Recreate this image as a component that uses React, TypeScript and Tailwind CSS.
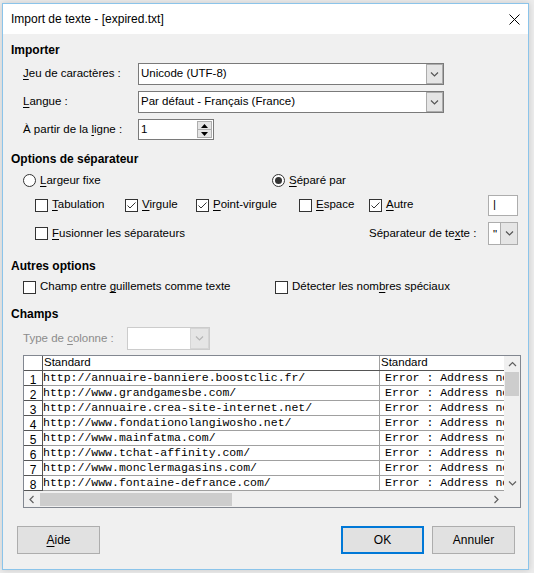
import React from 'react';

const rows = [
  'http://annuaire-banniere.boostclic.fr/',
  'http://www.grandgamesbe.com/',
  'http://annuaire.crea-site-internet.net/',
  'http://www.fondationolangiwosho.net/',
  'http://www.mainfatma.com/',
  'http://www.tchat-affinity.com/',
  'http://www.monclermagasins.com/',
  'http://www.fontaine-defrance.com/',
];

const U = ({ children }: { children: React.ReactNode }) => (
  <span className="underline decoration-1 underline-offset-[2px]">{children}</span>
);

function CheckBox({ checked = false }: { checked?: boolean }) {
  return (
    <span className="w-[13px] h-[13px] border border-[#333] bg-white flex items-center justify-center shrink-0">
      {checked && (
        <svg width="11" height="11" viewBox="0 0 11 11">
          <path d="M1.5 5.5 L4 8 L9.5 2.5" fill="none" stroke="#333" strokeWidth="1" />
        </svg>
      )}
    </span>
  );
}

function Radio({ on = false }: { on?: boolean }) {
  return (
    <span className="w-[13px] h-[13px] rounded-full border border-[#333] bg-white flex items-center justify-center shrink-0">
      {on && <span className="w-[7px] h-[7px] rounded-full bg-[#333]" />}
    </span>
  );
}

function Chevron({ dir = 'down', color = '#555' }: { dir?: 'down' | 'up' | 'left' | 'right'; color?: string }) {
  const d = {
    down: 'M1 1.5 L4.5 5 L8 1.5',
    up: 'M1 5 L4.5 1.5 L8 5',
    left: 'M5.5 1 L2 4.5 L5.5 8',
    right: 'M2.5 1 L6 4.5 L2.5 8',
  }[dir];
  const vertical = dir === 'down' || dir === 'up';
  return (
    <svg width={vertical ? 9 : 8} height={vertical ? 7 : 9} viewBox={vertical ? '0 0 9 7' : '0 0 8 9'}>
      <path d={d} fill="none" stroke={color} strokeWidth="1.2" />
    </svg>
  );
}

function Combo({ value, className }: { value: string; className: string }) {
  return (
    <div className={`flex h-[22px] border border-[#7a7a7a] bg-white ${className}`}>
      <div className="flex-1 flex items-center pl-[2px] overflow-hidden whitespace-nowrap">{value}</div>
      <div className="w-[17px] bg-[#e5e5e5] border border-[#acacac] flex items-center justify-center">
        <Chevron />
      </div>
    </div>
  );
}

export default function App() {
  return (
    <div
      className="w-[534px] h-[573px] bg-[#ececec] pt-[3px] pl-[2px] overflow-hidden text-[11.5px] text-black"
      style={{ fontFamily: '"Liberation Sans", Arial, sans-serif' }}
    >
      <div className="w-[527px] h-[567px] border border-[#8bc4ea] bg-[#f0f0f0] flex flex-col shadow-[0_0_6px_rgba(0,0,0,0.15)]">
        {/* Title bar */}
        <div className="h-[30px] bg-white flex items-center justify-between pl-[8px] pr-[8px] shrink-0">
          <span className="text-[12px]">Import de texte - [expired.txt]</span>
          <svg width="11" height="11" viewBox="0 0 11 11">
            <path d="M0.5 0.5 L10.5 10.5 M10.5 0.5 L0.5 10.5" stroke="#000" strokeWidth="1" />
          </svg>
        </div>

        <div className="flex flex-col pl-[8px]">
          {/* Importer */}
          <div className="mt-[8px] h-[16px] flex items-center font-bold text-[12px]">Importer</div>

          <div className="mt-[5px] h-[22px] flex items-center ml-[12px]">
            <span className="w-[115px]"><U>J</U>eu de caractères :</span>
            <Combo value="Unicode (UTF-8)" className="w-[306px]" />
          </div>
          <div className="mt-[6px] h-[22px] flex items-center ml-[12px]">
            <span className="w-[115px]"><U>L</U>angue :</span>
            <Combo value="Par défaut - Français (France)" className="w-[306px]" />
          </div>
          <div className="mt-[6px] h-[21px] flex items-center ml-[12px]">
            <span className="w-[115px]">À partir de la <U>l</U>igne :</span>
            <div className="w-[76px] h-[21px] border border-[#7a7a7a] bg-white flex">
              <div className="flex-1 pl-[2px] flex items-center">1</div>
              <div className="w-[15px] flex flex-col my-[1px] mr-[1px]">
                <div className="flex-1 bg-[#e5e5e5] border border-[#adadad] flex items-center justify-center">
                  <svg width="7" height="4" viewBox="0 0 7 4"><path d="M0 4 L3.5 0 L7 4 Z" fill="#000" /></svg>
                </div>
                <div className="flex-1 bg-[#e5e5e5] border border-t-0 border-[#adadad] flex items-center justify-center">
                  <svg width="7" height="4" viewBox="0 0 7 4"><path d="M0 0 L3.5 4 L7 0 Z" fill="#000" /></svg>
                </div>
              </div>
            </div>
          </div>

          {/* Options de séparateur */}
          <div className="mt-[11px] h-[16px] flex items-center font-bold text-[12px]">Options de séparateur</div>
          <div className="mt-[6px] h-[15px] flex items-center ml-[12px]">
            <div className="w-[249px] flex items-center gap-[4px]">
              <Radio />
              <span><U>L</U>argeur fixe</span>
            </div>
            <div className="flex items-center gap-[4px]">
              <Radio on />
              <span><U>S</U>éparé par</span>
            </div>
          </div>
          <div className="mt-[6px] h-[22px] flex items-center ml-[24px]">
            <div className="w-[90px] flex items-center gap-[4px]">
              <CheckBox />
              <span><U>T</U>abulation</span>
            </div>
            <div className="w-[71px] flex items-center gap-[4px]">
              <CheckBox checked />
              <span><U>V</U>irgule</span>
            </div>
            <div className="w-[103px] flex items-center gap-[4px]">
              <CheckBox checked />
              <span><U>P</U>oint-virgule</span>
            </div>
            <div className="w-[70px] flex items-center gap-[4px]">
              <CheckBox />
              <span><U>E</U>space</span>
            </div>
            <div className="w-[119px] flex items-center gap-[4px]">
              <CheckBox checked />
              <span><U>A</U>utre</span>
            </div>
            <div className="w-[30px] h-[21px] border border-[#adadad] bg-white flex items-center pl-[4px]">|</div>
          </div>
          <div className="mt-[6px] h-[23px] flex items-center ml-[24px]">
            <div className="w-[334px] flex items-center gap-[4px]">
              <CheckBox />
              <span><U>F</U>usionner les séparateurs</span>
            </div>
            <span className="w-[119px]">Séparateur de te<U>x</U>te :</span>
            <div className="w-[30px] h-[23px] border border-[#adadad] bg-white flex">
              <div className="w-[11px] pl-[4px] pt-[3px]">"</div>
              <div className="flex-1 bg-[#e5e5e5] border-l border-[#adadad] flex items-center justify-center">
                <Chevron />
              </div>
            </div>
          </div>

          {/* Autres options */}
          <div className="mt-[13px] h-[16px] flex items-center font-bold text-[12px]">Autres options</div>
          <div className="mt-[6px] h-[14px] flex items-center ml-[12px]">
            <div className="w-[252px] flex items-center gap-[4px]">
              <CheckBox />
              <span>Champ entre <U>g</U>uillemets comme texte</span>
            </div>
            <div className="flex items-center gap-[4px]">
              <CheckBox />
              <span>Détecter les nom<U>b</U>res spéciaux</span>
            </div>
          </div>

          {/* Champs */}
          <div className="mt-[12px] h-[16px] flex items-center font-bold text-[12px]">Champs</div>
          <div className="mt-[5px] h-[23px] flex items-center ml-[12px]">
            <span className="w-[104px] text-[#8c8c8c]">Type de <U>c</U>olonne :</span>
            <div className="w-[83px] h-[23px] border border-[#cccccc] bg-white flex">
              <div className="flex-1" />
              <div className="w-[19px] bg-[#e5e5e5] border border-[#d5d5d5] flex items-center justify-center">
                <Chevron color="#b5b5b5" />
              </div>
            </div>
          </div>

          {/* Table */}
          <div className="mt-[5px] ml-[12px] w-[498px] h-[153px] border border-[#828790] bg-[#f0f0f0] flex">
            <div className="w-[480px] flex flex-col">
              <div className="h-[15px] flex bg-white border-b border-[#555]">
                <div className="w-[19px] border-r border-[#555]" />
                <div className="w-[337px] border-r border-[#a0a0a0] pl-[1px] flex items-center">Standard</div>
                <div className="flex-1 pl-[1px] flex items-center">Standard</div>
              </div>
              {rows.map((r, i) => (
                <div key={i} className="h-[15px] flex bg-white">
                  <div className="w-[19px] border-r border-b border-[#555] text-[12px] leading-[14px] pt-[2px] text-center">
                    {i + 1}
                  </div>
                  <div
                    className="flex-1 flex border-b border-[#a0a0a0] text-[11.5px] leading-[14px] whitespace-nowrap overflow-hidden"
                    style={{ fontFamily: '"Liberation Mono", "Courier New", monospace' }}
                  >
                    <div className="w-[337px] border-r border-[#a0a0a0] overflow-hidden">{r}</div>
                    <div className="flex-1 pl-[5px] overflow-hidden">Error : Address not found</div>
                  </div>
                </div>
              ))}
              <div className="flex-1 flex items-center">
                <div className="w-[16px] flex items-center justify-center">
                  <Chevron dir="left" color="#606060" />
                </div>
                <div className="w-[192px] h-[13px] bg-[#cdcdcd]" />
                <div className="flex-1" />
                <div className="w-[16px] flex items-center justify-center">
                  <Chevron dir="right" color="#606060" />
                </div>
              </div>
            </div>
            <div className="w-[16px] flex flex-col">
              <div className="h-[16px] flex items-center justify-center">
                <Chevron dir="up" color="#606060" />
              </div>
              <div className="mx-[1px] h-[24px] bg-[#cdcdcd]" />
              <div className="flex-1" />
              <div className="h-[16px] flex items-center justify-center">
                <Chevron dir="down" color="#606060" />
              </div>
              <div className="h-[16px]" />
            </div>
          </div>

          {/* Buttons */}
          <div className="mt-[18px] h-[28px] flex">
            <button className="ml-[6px] w-[83px] h-[28px] bg-[#e1e1e1] border border-[#adadad] text-[12px]">
              <U>A</U>ide
            </button>
            <button className="ml-[241px] w-[83px] h-[28px] bg-[#e1e1e1] border-2 border-[#0078d7] text-[12px]">
              OK
            </button>
            <button className="ml-[8px] w-[83px] h-[28px] bg-[#e1e1e1] border border-[#adadad] text-[12px]">
              Annuler
            </button>
          </div>
        </div>
      </div>
    </div>
  );
}
